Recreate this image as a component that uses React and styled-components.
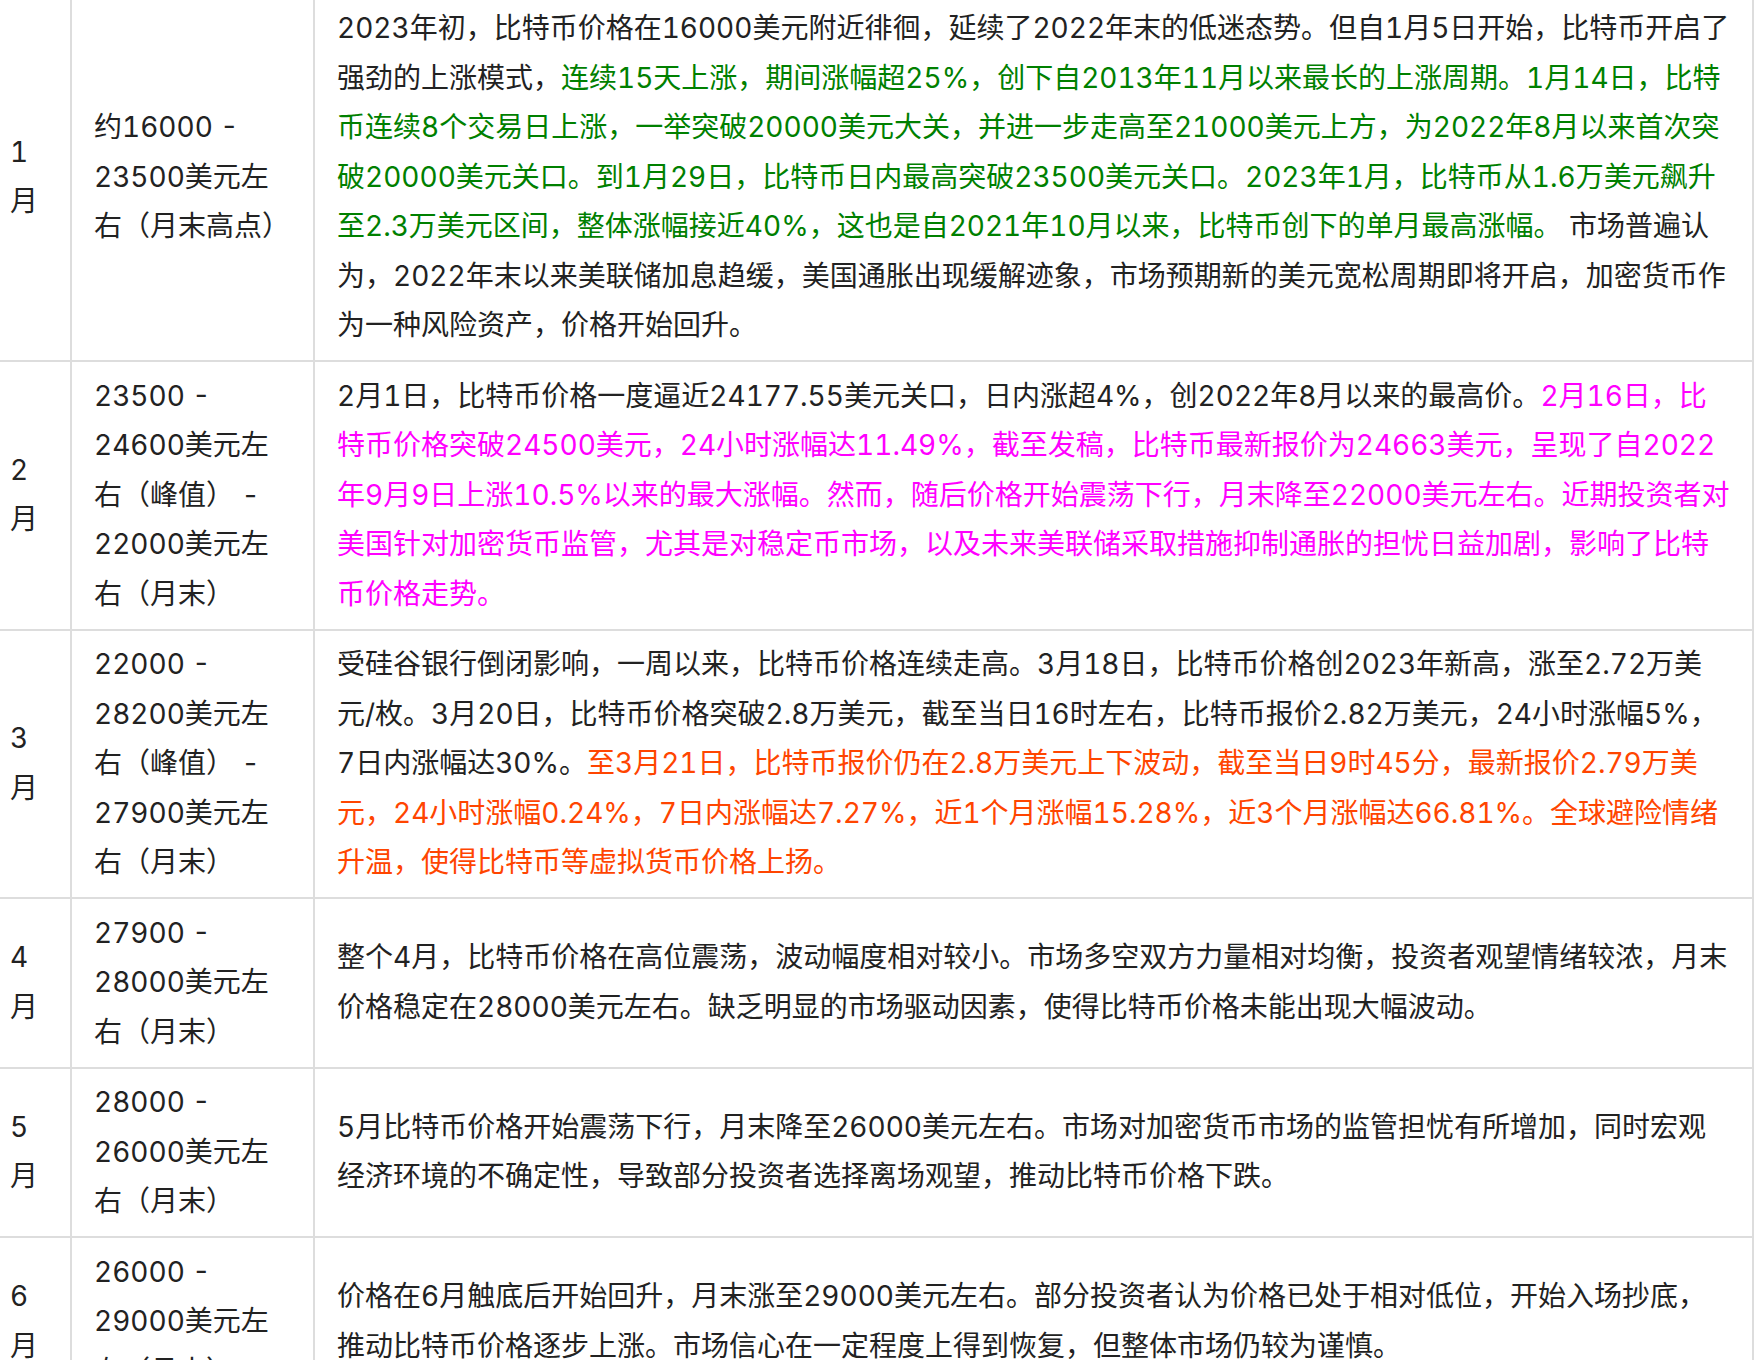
import React from 'react'
import styled, {createGlobalStyle} from 'styled-components'

const GlobalStyle = createGlobalStyle`
  html, body {
    margin: 0;
    padding: 0;
    background: #fff;
    overflow: hidden;
  }
`

const Table = styled.table`
  border-collapse: collapse;
  table-layout: fixed;
  width: 1768px;
  margin: -7.5px 0 0 -14px;
  font-family: Inter, "Noto Sans CJK SC", sans-serif;
  font-feature-settings: "tnum";
  font-size: 28px;
  line-height: 49.5px;
  color: #222;
`

const Cell = styled.td`
  border: 2px solid #ddd;
  padding: 9.5px 22px;
  vertical-align: middle;
  word-break: normal;
`

const MonthCell = styled(Cell)`
  width: 38px;
`

const RangeCell = styled(Cell)`
  width: 197px;
  white-space: pre-line;
`

const Mark = styled.span`
  color: ${props => props.tone};
`

const GREEN = '#008000'
const MAGENTA = '#ff00ff'
const ORANGE = '#ff4500'

const rows = [
  {
    month: '1',
    range: '约16000 -\n23500美元左\n右（月末高点）',
    parts: [
      ['2023年初，比特币价格在16000美元附近徘徊，延续了2022年末的低迷态势。但自1月5日开始，比特币开启了强劲的上涨模式，'],
      ['连续15天上涨，期间涨幅超25%，创下自2013年11月以来最长的上涨周期。1月14日，比特币连续8个交易日上涨，一举突破20000美元大关，并进一步走高至21000美元上方，为2022年8月以来首次突破20000美元关口。到1月29日，比特币日内最高突破23500美元关口。2023年1月，比特币从1.6万美元飙升至2.3万美元区间，整体涨幅接近40%，这也是自2021年10月以来，比特币创下的单月最高涨幅。', GREEN],
      [' 市场普遍认为，2022年末以来美联储加息趋缓，美国通胀出现缓解迹象，市场预期新的美元宽松周期即将开启，加密货币作为一种风险资产，价格开始回升。'],
    ],
  },
  {
    month: '2',
    range: '23500 -\n24600美元左\n右（峰值） -\n22000美元左\n右（月末）',
    parts: [
      ['2月1日，比特币价格一度逼近24177.55美元关口，日内涨超4%，创2022年8月以来的最高价。'],
      ['2月16日，比特币价格突破24500美元，24小时涨幅达11.49%，截至发稿，比特币最新报价为24663美元，呈现了自2022年9月9日上涨10.5%以来的最大涨幅。然而，随后价格开始震荡下行，月末降至22000美元左右。近期投资者对美国针对加密货币监管，尤其是对稳定币市场，以及未来美联储采取措施抑制通胀的担忧日益加剧，影响了比特币价格走势。', MAGENTA],
    ],
  },
  {
    month: '3',
    range: '22000 -\n28200美元左\n右（峰值） -\n27900美元左\n右（月末）',
    parts: [
      ['受硅谷银行倒闭影响，一周以来，比特币价格连续走高。3月18日，比特币价格创2023年新高，涨至2.72万美元/枚。3月20日，比特币价格突破2.8万美元，截至当日16时左右，比特币报价2.82万美元，24小时涨幅5%，7日内涨幅达30%。'],
      ['至3月21日，比特币报价仍在2.8万美元上下波动，截至当日9时45分，最新报价2.79万美元，24小时涨幅0.24%，7日内涨幅达7.27%，近1个月涨幅15.28%，近3个月涨幅达66.81%。全球避险情绪升温，使得比特币等虚拟货币价格上扬。', ORANGE],
    ],
  },
  {
    month: '4',
    range: '27900 -\n28000美元左\n右（月末）',
    parts: [
      ['整个4月，比特币价格在高位震荡，波动幅度相对较小。市场多空双方力量相对均衡，投资者观望情绪较浓，月末价格稳定在28000美元左右。缺乏明显的市场驱动因素，使得比特币价格未能出现大幅波动。'],
    ],
  },
  {
    month: '5',
    range: '28000 -\n26000美元左\n右（月末）',
    parts: [
      ['5月比特币价格开始震荡下行，月末降至26000美元左右。市场对加密货币市场的监管担忧有所增加，同时宏观经济环境的不确定性，导致部分投资者选择离场观望，推动比特币价格下跌。'],
    ],
  },
  {
    month: '6',
    range: '26000 -\n29000美元左\n右（月末）',
    parts: [
      ['价格在6月触底后开始回升，月末涨至29000美元左右。部分投资者认为价格已处于相对低位，开始入场抄底，推动比特币价格逐步上涨。市场信心在一定程度上得到恢复，但整体市场仍较为谨慎。'],
    ],
  },
]

const App = () => (
  <>
    <GlobalStyle/>
    <Table>
      <tbody>
        {rows.map(row => (
          <tr key={row.month}>
            <MonthCell>{row.month}月</MonthCell>
            <RangeCell>{row.range}</RangeCell>
            <Cell>
              {row.parts.map(([text, tone], i) => tone
                ? <Mark key={i} tone={tone}>{text}</Mark>
                : <React.Fragment key={i}>{text}</React.Fragment>)}
            </Cell>
          </tr>
        ))}
      </tbody>
    </Table>
  </>
)

export default App
